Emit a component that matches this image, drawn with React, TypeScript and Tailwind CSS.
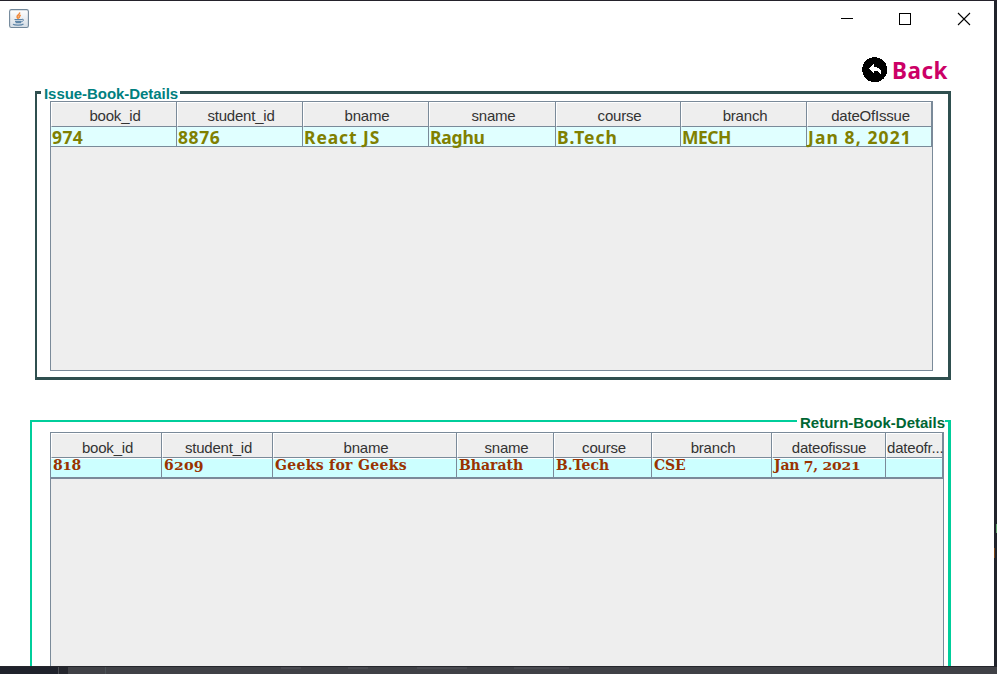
import React from "react";

type Cell = { head: string; value: string; tracking: string };

const issued: Cell[] = [
  { head: "book_id", value: "974", tracking: "tracking-[0.4px]" },
  { head: "student_id", value: "8876", tracking: "tracking-[0.6px]" },
  { head: "bname", value: "React JS", tracking: "tracking-[0.9px]" },
  { head: "sname", value: "Raghu", tracking: "tracking-[-0.2px]" },
  { head: "course", value: "B.Tech", tracking: "tracking-[1px]" },
  { head: "branch", value: "MECH", tracking: "tracking-[-0.5px]" },
  { head: "dateOfIssue", value: "Jan 8, 2021", tracking: "tracking-[1.1px]" },
];

const returned: Cell[] = [
  { head: "book_id", value: "818", tracking: "tracking-[-0.5px]" },
  { head: "student_id", value: "6209", tracking: "tracking-[0.2px]" },
  { head: "bname", value: "Geeks for Geeks", tracking: "tracking-[0.3px]" },
  { head: "sname", value: "Bharath", tracking: "tracking-[0px]" },
  { head: "course", value: "B.Tech", tracking: "tracking-[0px]" },
  { head: "branch", value: "CSE", tracking: "tracking-[-0.2px]" },
  { head: "dateofissue", value: "Jan 7, 2021", tracking: "tracking-[-0.25px]" },
  { head: "dateofr...", value: "", tracking: "tracking-[0px]" },
];

// Old-style figures: 0-2 sit at x-height, 3-5, 7 and 9 hang below the baseline.
function OldStyle({ text }: { text: string }) {
  return (
    <>
      {text.split("").map((c, i) =>
        /[012]/.test(c) ? (
          <span key={i} className="inline-block origin-[50%_11px] scale-y-[0.83]">{c}</span>
        ) : /[34579]/.test(c) ? (
          <span key={i} className="relative top-[2px]">{c}</span>
        ) : (
          c
        )
      )}
    </>
  );
}

function JavaIcon() {
  return (
    <svg width="20" height="20" viewBox="0 0 20 20" fill="none">
      <defs>
        <linearGradient id="tile" x1="0" y1="0" x2="0" y2="1">
          <stop offset="0" stopColor="#fff" />
          <stop offset="1" stopColor="#d5dde5" />
        </linearGradient>
      </defs>
      <rect x=".6" y=".6" width="18.8" height="17.9" rx="1.8" fill="url(#tile)" stroke="#71879a" strokeWidth="1.1" />
      <path d="M10.5 3.3c1 2-3 3-2.4 4.7.2.8 1 1.2 1.3 1.8M11.8 6.2c-2 .8-2 1.8-1.2 3" stroke="#f08a3c" strokeWidth="1.5" />
      <path d="M5.5 10.5h7.8M6 12.3h6.5M6.6 13.7h5.6M4 15.3c2 1.3 8.5 1.2 10.5-.2" stroke="#5f86a8" strokeWidth="1.2" />
      <path d="M13 10.3c2.2-.5 2 1.9-.5 2.3" stroke="#5f86a8" />
    </svg>
  );
}

function TitleBar() {
  return (
    <div className="flex h-[36px] items-start justify-between pl-[9px] pr-[22px]">
      <div className="pt-[8px]"><JavaIcon /></div>
      <svg className="mt-[11px]" width="132" height="14" viewBox="0 0 132 14" fill="none" stroke="#000" shapeRendering="crispEdges">
        <path d="M1 6.5h12" />
        <rect x="59.5" y="1.5" width="11" height="11" />
        <path d="M118 1l12 12M130 1l-12 12" shapeRendering="auto" strokeWidth="1.1" />
      </svg>
    </div>
  );
}

function BackButton() {
  return (
    <button className="flex h-[30px] items-center">
      <svg width="26" height="26" viewBox="0 0 26 26" shapeRendering="crispEdges">
        <circle cx="12.7" cy="12.7" r="12.5" fill="#000" />
        <path d="M7 11.5l5-4.5v3c5 0 8 2.5 7.2 8-1.2-3-3-4-7.2-4v2.5z" fill="#fff" />
      </svg>
      <span className="ml-[4px] pt-[2px] font-['Noto_Sans'] text-[22.5px] font-bold leading-[30px] tracking-[0.5px] text-[#cc0066]">Back</span>
    </button>
  );
}

export default function App() {
  return (
    <div className="flex h-[674px] w-[997px] flex-col overflow-hidden bg-[#24222b] pt-px font-['Liberation_Sans',sans-serif]">
      <div className="flex h-[665px]">
        <main className="w-[994px] overflow-hidden bg-white">
          <TitleBar />
          <div className="flex h-[54px] justify-end pr-[46px] pt-[18px]"><BackButton /></div>

          <section className="relative ml-[35px] h-[289px] w-[916px] border-y-[3px] border-l-2 border-r-[3px] border-[#2f4f4f] pl-[13px] pt-[7px]">
            <h2 className="absolute -top-[8px] left-[4px] h-[15px] w-[139px] whitespace-nowrap bg-white pl-[3px] text-[15px] font-bold leading-[15px] tracking-[-0.05px] text-[#008080]">Issue-Book-Details</h2>
            <div className="h-[270px] w-[883px] border border-[#7a8a99] bg-[#eee]">
              <div className="grid grid-cols-[126px_126px_126px_127px_125px_126px_125px]">
                {issued.map((c, i) => (
                  <div key={i} className="border-r border-[#7a8a99]">
                    <div className="h-[25px] border-b border-l border-t border-b-[#7a8a99] border-l-white border-t-white pl-[2px] text-center text-[15px] leading-[26px] tracking-[-0.2px] text-[#333]">{c.head}</div>
                    <div className="h-[20px] border-b border-[#7a8a99] bg-[#e0ffff] pl-px">
                      <span className={"block h-[19px] whitespace-nowrap font-['Noto_Sans'] text-[17.5px] font-bold leading-[20px] text-[#808000] " + c.tracking}>{c.value}</span>
                    </div>
                  </div>
                ))}
              </div>
            </div>
          </section>

          <section className="relative ml-[30px] mt-[40px] h-[260px] w-[921px] border-l-2 border-r-[3px] border-t-2 border-[#00ce9b] pl-[18px] pt-[10px]">
            <h2 className="absolute -top-[7px] right-[3px] h-[15px] w-[148px] whitespace-nowrap bg-white pl-[3px] text-[15px] font-bold leading-[15px] text-[#006633]">Return-Book-Details</h2>
            <div className="h-[260px] w-[894px] border border-[#7a8a99] bg-[#eee]">
              <div className="grid grid-cols-[111px_111px_184px_97px_98px_120px_114px_57px]">
                {returned.map((c, i) => (
                  <div key={i} className="border-r border-[#7a8a99]">
                    <div className="h-[25px] whitespace-nowrap border-b border-l border-t border-b-[#7a8a99] border-l-white border-t-white text-center text-[15px] leading-[28px] tracking-[-0.2px] text-[#333]"><span className={i < 6 ? "pl-[2px]" : ""}>{c.head}</span></div>
                    <div className="h-[21px] border-b-2 border-t border-b-[#7a8a99] border-t-white bg-[#ccffff] pl-[2px]">
                      <span className={"block h-[18px] whitespace-nowrap font-['DejaVu_Serif'] text-[14px] font-bold leading-[12px] text-[#993300] " + c.tracking}><OldStyle text={c.value} /></span>
                    </div>
                  </div>
                ))}
              </div>
            </div>
          </section>
        </main>
        <aside className="flex w-[3px] flex-col bg-[#20232b] pt-[523px]">
          <div className="ml-[2px] h-[9px] bg-[#5fa36a]" />
          <div className="mt-[15px] h-[10px] w-px bg-[#7a4518]" />
        </aside>
      </div>
      <footer className="flex h-[8px] border-t border-[#24252b] bg-[#404146]">
        <div className="w-[58px] bg-[#1f222b]" />
        <div className="w-px bg-[#4a4c52]" />
        <div className="w-[9px] bg-[#24262d]" />
        <div className="ml-[37px] w-px bg-[#4b5256]" />
        <div className="ml-[175px] h-[2px] w-[20px] bg-[#4a4b51]" />
        <div className="ml-[47px] h-[2px] w-[20px] bg-[#4a4b51]" />
        <div className="ml-[49px] h-[2px] w-[50px] bg-[#4a4b51]" />
        <div className="ml-[47px] h-[2px] w-[55px] bg-[#4a4b51]" />
      </footer>
    </div>
  );
}
